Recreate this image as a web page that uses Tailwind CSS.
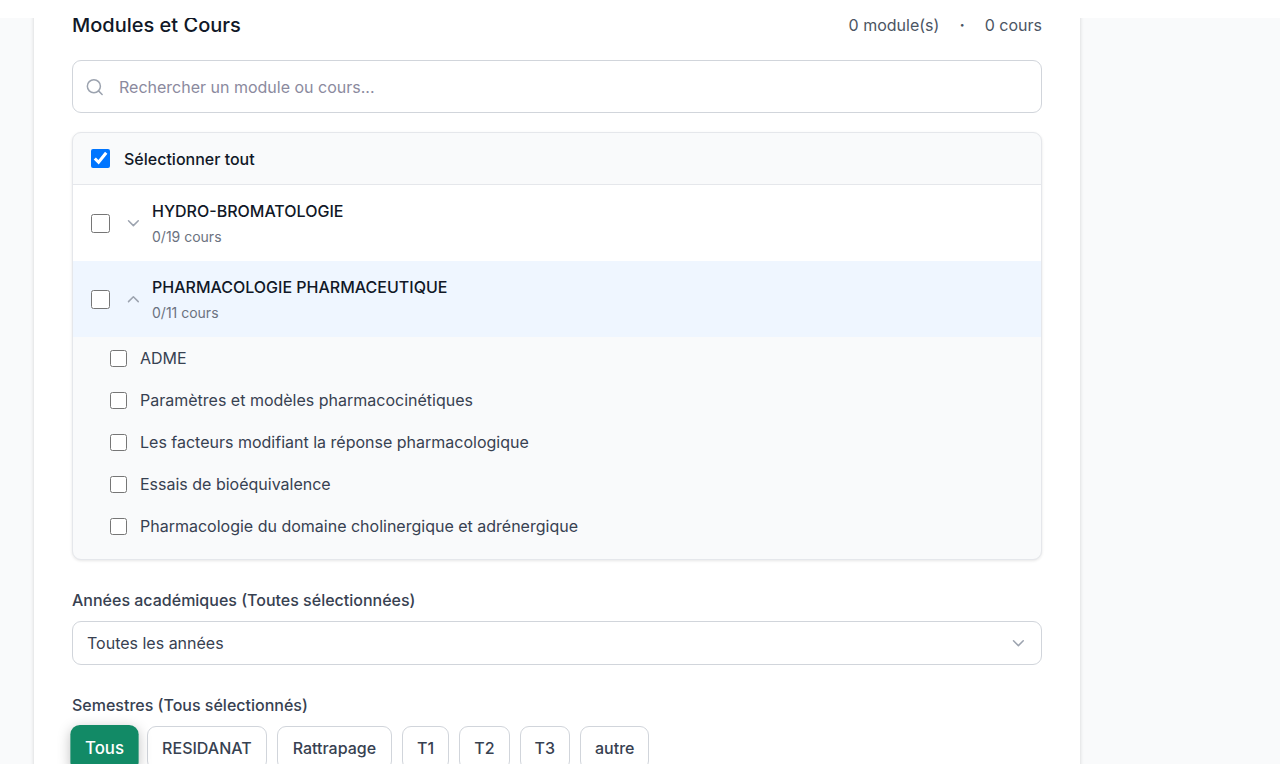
<!DOCTYPE html>
<html lang="fr">
<head>
  <meta charset="UTF-8" />
  <meta name="viewport" content="width=device-width, initial-scale=1.0" />
  <title>Modules et Cours</title>
  <script src="https://cdn.jsdelivr.net/npm/@tailwindcss/browser@4"></script>
</head>
<body class="h-screen overflow-hidden bg-[#f9fafb] font-['Inter','Liberation_Sans',sans-serif] text-[16px] leading-6 text-[#374151]">
  <!-- Barre supérieure -->
  <header class="fixed inset-x-0 top-0 z-10 h-[18px] bg-white"></header>

  <main class="pl-[34px] pr-[200px]">
    <div class="min-h-screen bg-white px-[38px] pt-[11px] shadow-[0_1px_4px_rgba(0,0,0,0.16)]">
      <!-- Titre et compteurs -->
      <div class="flex items-center justify-between">
        <h2 class="text-[20px] leading-7 font-medium text-[#111827]">Modules et Cours</h2>
        <div class="flex items-center gap-5 text-[#4b5563]">
          <span>0 module(s)</span>
          <span class="font-bold">·</span>
          <span>0 cours</span>
        </div>
      </div>

      <!-- Recherche -->
      <div class="relative mt-[21px]">
        <svg class="absolute left-[14px] top-[18px] size-[18px] text-[#9ca3af]" viewBox="0 0 24 24" fill="none" stroke="currentColor" stroke-width="2" stroke-linecap="round" stroke-linejoin="round">
          <circle cx="10.5" cy="11" r="8.7" />
          <path d="m21.5 22-4.8-4.8" />
        </svg>
        <input type="text" aria-label="Rechercher un module ou cours" placeholder="Rechercher un module ou cours..." class="h-[53px] w-full rounded-[9px] border border-[#d1d5db] bg-white pl-[46px] pr-4 placeholder:text-[#8b8a9e]" />
      </div>

      <!-- Liste des modules -->
      <div class="mt-[19px] overflow-hidden rounded-[9px] border border-[#e5e7eb] bg-[#f9fafb] pb-3 shadow-[0_1px_3px_rgba(0,0,0,0.1)]">
        <label class="flex h-[52px] items-center gap-[14px] border-b border-[#e5e7eb] px-[18px] font-medium text-[#111827]">
          <input type="checkbox" checked class="size-[19px]" />
          Sélectionner tout
        </label>

        <div class="flex h-[76px] items-center bg-white px-[18px]">
          <input type="checkbox" id="module-hydro" class="size-[19px]" />
          <button type="button" aria-label="Déplier" class="ml-[14px] flex size-[18px] items-center justify-center text-[#9ca3af]">
            <svg class="size-[18px]" viewBox="0 0 24 24" fill="none" stroke="currentColor" stroke-width="2" stroke-linecap="round" stroke-linejoin="round"><path d="m6 9 6.5 6.5L19 9" /></svg>
          </button>
          <label for="module-hydro" class="ml-[10px] flex flex-col gap-[2px] pt-[2px]">
            <span class="font-medium text-[#111827]">HYDRO-BROMATOLOGIE</span>
            <span class="text-[14px] text-[#6b7280]">0/19 cours</span>
          </label>
        </div>

        <div class="flex h-[76px] items-center bg-[#eff6ff] px-[18px]">
          <input type="checkbox" id="module-pharma" class="size-[19px]" />
          <button type="button" aria-label="Replier" class="ml-[14px] flex size-[18px] items-center justify-center text-[#9ca3af]">
            <svg class="size-[18px]" viewBox="0 0 24 24" fill="none" stroke="currentColor" stroke-width="2" stroke-linecap="round" stroke-linejoin="round"><path d="m6 15.5 6.5-6.5 6.5 6.5" /></svg>
          </button>
          <label for="module-pharma" class="ml-[10px] flex flex-col gap-[2px] pt-[2px]">
            <span class="font-medium text-[#111827]">PHARMACOLOGIE PHARMACEUTIQUE</span>
            <span class="text-[14px] text-[#6b7280]">0/11 cours</span>
          </label>
        </div>

        <!-- Cours du module déplié -->
        <div class="pl-[37px]">
          <label class="flex h-[42px] items-center gap-[13px]"><input type="checkbox" class="size-[17px]" />ADME</label>
          <label class="flex h-[42px] items-center gap-[13px]"><input type="checkbox" class="size-[17px]" />Paramètres et modèles pharmacocinétiques</label>
          <label class="flex h-[42px] items-center gap-[13px]"><input type="checkbox" class="size-[17px]" />Les facteurs modifiant la réponse pharmacologique</label>
          <label class="flex h-[42px] items-center gap-[13px]"><input type="checkbox" class="size-[17px]" />Essais de bioéquivalence</label>
          <label class="flex h-[42px] items-center gap-[13px]"><input type="checkbox" class="size-[17px]" />Pharmacologie du domaine cholinergique et adrénergique</label>
        </div>
      </div>

      <!-- Années -->
      <label for="annees" class="mt-7 block font-medium">Années académiques (Toutes sélectionnées)</label>
      <div class="relative mt-[9px]">
        <select id="annees" class="h-11 w-full appearance-none rounded-[9px] border border-[#d1d5db] bg-white px-[14px]">
          <option>Toutes les années</option>
        </select>
        <svg class="pointer-events-none absolute right-[15px] top-[13px] size-[18px] text-[#9ca3af]" viewBox="0 0 24 24" fill="none" stroke="currentColor" stroke-width="2" stroke-linecap="round" stroke-linejoin="round"><path d="m6 9 6.5 6.5L19 9" /></svg>
      </div>

      <!-- Semestres -->
      <p class="mt-7 font-medium">Semestres (Tous sélectionnés)</p>
      <div class="mt-[9px] flex flex-wrap gap-[10px] font-medium">
        <button type="button" class="h-11 scale-105 rounded-[9px] bg-[#128a66] px-[14px] text-white shadow-[0_3px_12px_rgba(0,0,0,0.25)]">Tous</button>
        <button type="button" class="h-11 rounded-[9px] border border-[#d1d5db] bg-white px-[14px]">RESIDANAT</button>
        <button type="button" class="h-11 rounded-[9px] border border-[#d1d5db] bg-white px-[15px]">Rattrapage</button>
        <button type="button" class="h-11 rounded-[9px] border border-[#d1d5db] bg-white px-[14px]">T1</button>
        <button type="button" class="h-11 rounded-[9px] border border-[#d1d5db] bg-white px-[14px]">T2</button>
        <button type="button" class="h-11 rounded-[9px] border border-[#d1d5db] bg-white px-[14px]">T3</button>
        <button type="button" class="h-11 rounded-[9px] border border-[#d1d5db] bg-white px-[14px]">autre</button>
      </div>
    </div>
  </main>
</body>
</html>
